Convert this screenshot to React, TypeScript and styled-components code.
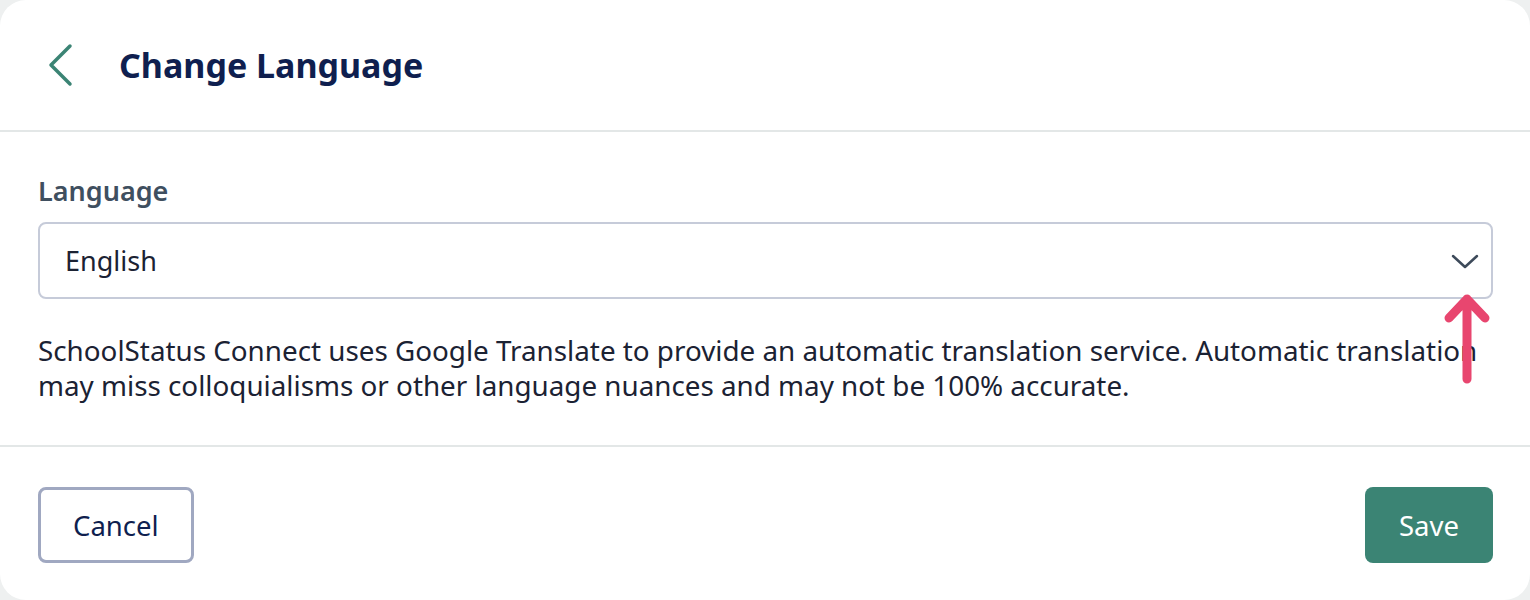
import React from "react";
import styled, { createGlobalStyle } from "styled-components";

const Global = createGlobalStyle`
  html, body { margin: 0; padding: 0; background: #eef0f0; }
  body { font-family: "Noto Sans", "Open Sans", sans-serif; }
  * { box-sizing: border-box; }
`;

const Card = styled.div`
  position: relative;
  width: 1530px;
  height: 600px;
  background: #ffffff;
  border-radius: 26px;
  overflow: hidden;
  display: flex;
  flex-direction: column;
`;

const Header = styled.div`
  height: 132px;
  display: flex;
  align-items: center;
  padding-left: 45px;
  gap: 45px;
  border-bottom: 2px solid #e3e7e7;
  flex-shrink: 0;
`;

const BackButton = styled.button`
  border: none;
  background: none;
  padding: 0;
  width: 29px;
  height: 44px;
  display: flex;
  align-items: center;
  justify-content: center;
  cursor: pointer;
`;

const Title = styled.h1`
  margin: 0;
  font-size: 34px;
  font-weight: 700;
  color: #0f1f4f;
  margin-top: 0;
`;

const Body = styled.div`
  padding: 0 37px 0 38px;
  height: 315px;
  border-bottom: 2px solid #e3e7e7;
  flex-shrink: 0;
`;

const Label = styled.div`
  font-size: 27px;
  font-weight: 600;
  color: #3f4f5f;
  margin-top: 41px;
  line-height: 36px;
`;

const Select = styled.div`
  margin-top: 13px;
  height: 77px;
  border: 2px solid #c6cbd9;
  border-radius: 8px;
  display: flex;
  align-items: center;
  justify-content: space-between;
  padding: 0 11px 0 25px;
  font-size: 27px;
  color: #1b2233;
`;

const Help = styled.p`
  margin: 34px 0 0;
  font-size: 27.8px;
  line-height: 35px;
  color: #1b2233;
`;

const Footer = styled.div`
  flex: 1;
  display: flex;
  align-items: flex-start;
  justify-content: space-between;
  padding: 40px 37px 0 38px;
`;

const Button = styled.button<{ $primary?: boolean }>`
  height: 76px;
  border-radius: 8px;
  font-family: "Noto Sans", "Open Sans", sans-serif;
  font-size: 27.5px;
  cursor: pointer;
  padding: 0 ${(p) => (p.$primary ? "34px" : "32px")};
  background: ${(p) => (p.$primary ? "#3b8474" : "#ffffff")};
  color: ${(p) => (p.$primary ? "#ffffff" : "#0f1f4f")};
  border: ${(p) => (p.$primary ? "none" : "3px solid #a0a8c1")};
`;

const Arrow = styled.svg`
  position: absolute;
  left: 1443px;
  top: 291px;
`;

export default function App() {
  return (
    <>
      <Global />
      <Card>
        <Header>
          <BackButton aria-label="Back">
            <svg width="28" height="44" viewBox="0 0 28 44" fill="none">
              <path
                d="M24 3 L5 22 L24 41"
                stroke="#3b8474"
                strokeWidth="3.5"
                strokeLinecap="round"
                strokeLinejoin="round"
              />
            </svg>
          </BackButton>
          <Title>Change Language</Title>
        </Header>
        <Body>
          <Label>Language</Label>
          <Select>
            <span>English</span>
            <svg width="30" height="20" viewBox="0 0 30 20" fill="none">
              <path
                d="M3 5 L15 16 L27 5"
                stroke="#3d4a5a"
                strokeWidth="2.5"
                strokeLinecap="round"
                strokeLinejoin="round"
              />
            </svg>
          </Select>
          <Help>
            SchoolStatus Connect uses Google Translate to provide an automatic translation service.
            Automatic translation may miss colloquialisms or other language nuances and may not be
            100% accurate.
          </Help>
        </Body>
        <Footer>
          <Button>Cancel</Button>
          <Button $primary>Save</Button>
        </Footer>
        <Arrow width="50" height="96" viewBox="0 0 50 96" fill="none">
          <path
            d="M24 8 L24 88 M6 27 L24 8 L42 27"
            stroke="#e8466f"
            strokeWidth="9"
            strokeLinecap="round"
            strokeLinejoin="round"
          />
        </Arrow>
      </Card>
    </>
  );
}
